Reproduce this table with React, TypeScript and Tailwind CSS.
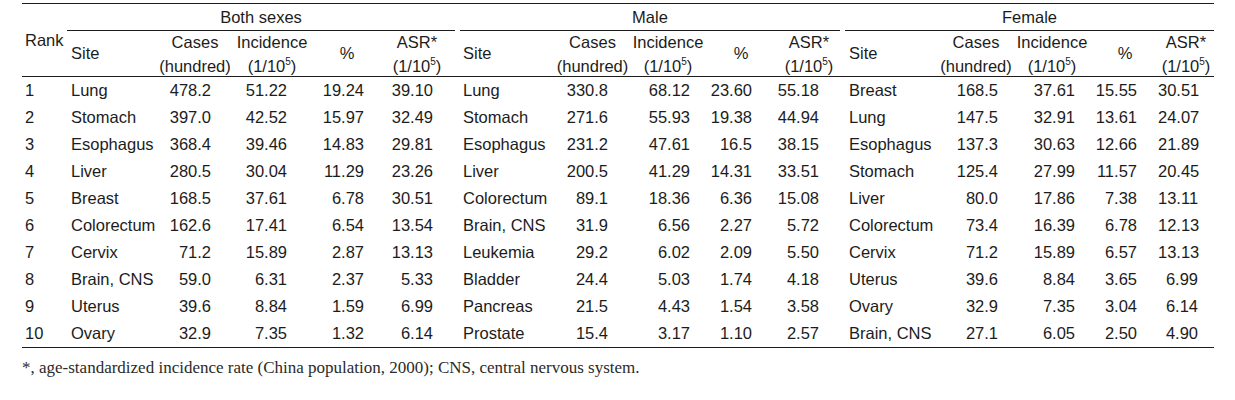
import React from 'react';

type Row = [string, string, string, string, string, string];

const both: Row[] = [
  ['1', 'Lung', '478.2', '51.22', '19.24', '39.10'],
  ['2', 'Stomach', '397.0', '42.52', '15.97', '32.49'],
  ['3', 'Esophagus', '368.4', '39.46', '14.83', '29.81'],
  ['4', 'Liver', '280.5', '30.04', '11.29', '23.26'],
  ['5', 'Breast', '168.5', '37.61', '6.78', '30.51'],
  ['6', 'Colorectum', '162.6', '17.41', '6.54', '13.54'],
  ['7', 'Cervix', '71.2', '15.89', '2.87', '13.13'],
  ['8', 'Brain, CNS', '59.0', '6.31', '2.37', '5.33'],
  ['9', 'Uterus', '39.6', '8.84', '1.59', '6.99'],
  ['10', 'Ovary', '32.9', '7.35', '1.32', '6.14'],
];

const male: string[][] = [
  ['Lung', '330.8', '68.12', '23.60', '55.18'],
  ['Stomach', '271.6', '55.93', '19.38', '44.94'],
  ['Esophagus', '231.2', '47.61', '16.5', '38.15'],
  ['Liver', '200.5', '41.29', '14.31', '33.51'],
  ['Colorectum', '89.1', '18.36', '6.36', '15.08'],
  ['Brain, CNS', '31.9', '6.56', '2.27', '5.72'],
  ['Leukemia', '29.2', '6.02', '2.09', '5.50'],
  ['Bladder', '24.4', '5.03', '1.74', '4.18'],
  ['Pancreas', '21.5', '4.43', '1.54', '3.58'],
  ['Prostate', '15.4', '3.17', '1.10', '2.57'],
];

const female: string[][] = [
  ['Breast', '168.5', '37.61', '15.55', '30.51'],
  ['Lung', '147.5', '32.91', '13.61', '24.07'],
  ['Esophagus', '137.3', '30.63', '12.66', '21.89'],
  ['Stomach', '125.4', '27.99', '11.57', '20.45'],
  ['Liver', '80.0', '17.86', '7.38', '13.11'],
  ['Colorectum', '73.4', '16.39', '6.78', '12.13'],
  ['Cervix', '71.2', '15.89', '6.57', '13.13'],
  ['Uterus', '39.6', '8.84', '3.65', '6.99'],
  ['Ovary', '32.9', '7.35', '3.04', '6.14'],
  ['Brain, CNS', '27.1', '6.05', '2.50', '4.90'],
];

// one grid for header and body so columns line up
const grid =
  'grid grid-cols-[45px_91px_74px_80px_70px_75px_98px_75px_76px_70px_66px_98px_72px_80px_66px_56px]';

// padding for the site column and the four number columns, per group
const sitePad = ['pl-[4px]', 'pl-[6px]', 'pl-[7px]'];
const numPad = [
  ['pr-[21px]', 'pr-[25px]', 'pr-[18px]', 'pr-[24px]'],
  ['pr-[22px]', 'pr-[16px]', 'pr-[24px]', 'pr-[23px]'],
  ['pr-[14px]', 'pr-[17px]', 'pr-[21px]', 'pr-[16px]'],
];
const groupLine = ['mr-[2px]', 'ml-[3px] mr-[2px]', 'ml-[3px]'];
const asrHead = ['pr-[5px]', '', ''];

function Per() {
  return (
    <>
      (1/10<sup className="text-[10px] relative -top-[7px]">5</sup>)
    </>
  );
}

function SubHeader({ g }: { g: number }) {
  return (
    <>
      <div className={`flex items-center ${sitePad[g]}`}>Site</div>
      <div className="flex flex-col items-center justify-center leading-[24px]">
        <span>Cases</span>
        <span>(hundred)</span>
      </div>
      <div className="flex flex-col items-center justify-center leading-[24px]">
        <span>Incidence</span>
        <span>
          <Per />
        </span>
      </div>
      <div className="flex items-center justify-center">%</div>
      <div className={`flex flex-col items-center justify-center leading-[24px] ${asrHead[g]}`}>
        <span>ASR*</span>
        <span>
          <Per />
        </span>
      </div>
    </>
  );
}

function Cells({ g, vals }: { g: number; vals: string[] }) {
  return (
    <>
      <div className={sitePad[g]}>{vals[0]}</div>
      {vals.slice(1).map((v, i) => (
        <div key={i} className={`text-right ${numPad[g][i]}`}>
          {v}
        </div>
      ))}
    </>
  );
}

export default function App() {
  return (
    <div className="w-[1235px] h-[400px] bg-white text-[#1c1c1c] pl-[22px]">
      <div className="w-[1192px] pt-[3px] font-['Liberation_Sans',Arial,sans-serif] text-[16.5px]">
        {/* header */}
        <div className={`${grid} grid-rows-[27px_45px] border-t border-b border-[#1c1c1c]`}>
          <div className="row-span-2 flex items-center pl-[3px]">Rank</div>
          {['Both sexes', 'Male', 'Female'].map((t, g) => (
            <div key={t} className="col-span-5">
              <div className={`h-[27px] flex items-center justify-center border-b border-[#1c1c1c] ${groupLine[g]}`}>
                {t}
              </div>
            </div>
          ))}
          <SubHeader g={0} />
          <SubHeader g={1} />
          <SubHeader g={2} />
        </div>

        {/* body */}
        <div className="border-b border-[#1c1c1c]">
          {both.map((r, i) => (
            <div key={r[0]} className={`${grid} h-[27px] items-center`}>
              <div className="pl-[3px]">{r[0]}</div>
              <Cells g={0} vals={r.slice(1)} />
              <Cells g={1} vals={male[i]} />
              <Cells g={2} vals={female[i]} />
            </div>
          ))}
        </div>
      </div>

      <p className="mt-[10px] leading-[20px] text-[17px] text-[#2a2a2a] font-['Liberation_Serif','Times_New_Roman',serif]">
        *, age-standardized incidence rate (China population, 2000); CNS, central nervous system.
      </p>
    </div>
  );
}
